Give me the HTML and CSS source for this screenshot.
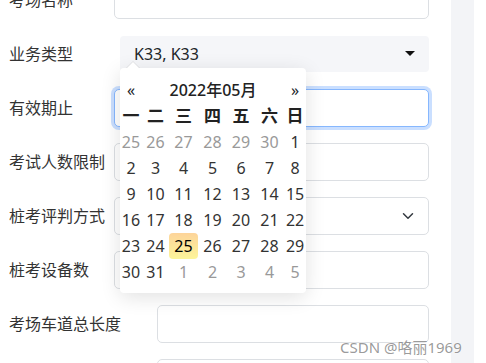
FILE: index.html
```html
<!DOCTYPE html>
<html lang="zh-CN">
<head>
    <meta charset="UTF-8">
    <meta name="viewport" content="width=device-width, initial-scale=1.0">
    <title>考场信息</title>
    <link rel="stylesheet" href="styles.css">
</head>
<body>
    <div class="page">
        <div class="form">
            <div class="row">
                <label class="label">考场名称</label>
                <input class="input" type="text">
            </div>
            <div class="row">
                <label class="label">业务类型</label>
                <div class="picker-btn">
                    <span>K33, K33</span>
                    <span class="caret"></span>
                </div>
            </div>
            <div class="row">
                <label class="label">有效期止</label>
                <input class="input focused" type="text">
            </div>
            <div class="row">
                <label class="label">考试人数限制</label>
                <input class="input" type="text">
            </div>
            <div class="row">
                <label class="label">桩考评判方式</label>
                <div class="input select">
                    <svg class="chevron" width="16" height="12" viewBox="0 0 16 16">
                        <path d="M2 5l6 6 6-6" fill="none" stroke="#343a40" stroke-width="2" stroke-linecap="round" stroke-linejoin="round"/>
                    </svg>
                </div>
            </div>
            <div class="row">
                <label class="label">桩考设备数</label>
                <input class="input" type="text">
            </div>
            <div class="row">
                <label class="label label-wide">考场车道总长度</label>
                <input class="input" type="text">
            </div>
            <div class="row">
                <label class="label label-wide"></label>
                <input class="input" type="text">
            </div>
        </div>
        <div class="side"></div>

        <!-- 日期选择弹层 -->
        <div class="datepicker">
            <table class="cal">
                <colgroup>
                    <col style="width: 22px">
                    <col style="width: 27px">
                    <col style="width: 29px">
                    <col style="width: 29px">
                    <col style="width: 28px">
                    <col style="width: 29px">
                    <col style="width: 22px">
                </colgroup>
                <thead>
                    <tr>
                        <th class="nav">«</th>
                        <th class="title" colspan="5">2022年05月</th>
                        <th class="nav">»</th>
                    </tr>
                    <tr class="dow">
                        <th>一</th><th>二</th><th>三</th><th>四</th><th>五</th><th>六</th><th>日</th>
                    </tr>
                </thead>
                <tbody>
                    <tr><td class="old">25</td><td class="old">26</td><td class="old">27</td><td class="old">28</td><td class="old">29</td><td class="old">30</td><td>1</td></tr>
                    <tr><td>2</td><td>3</td><td>4</td><td>5</td><td>6</td><td>7</td><td>8</td></tr>
                    <tr><td>9</td><td>10</td><td>11</td><td>12</td><td>13</td><td>14</td><td>15</td></tr>
                    <tr><td>16</td><td>17</td><td>18</td><td>19</td><td>20</td><td>21</td><td>22</td></tr>
                    <tr><td>23</td><td>24</td><td class="today">25</td><td>26</td><td>27</td><td>28</td><td>29</td></tr>
                    <tr><td>30</td><td>31</td><td class="new">1</td><td class="new">2</td><td class="new">3</td><td class="new">4</td><td class="new">5</td></tr>
                </tbody>
            </table>
        </div>

        <div class="watermark">CSDN @咯丽1969</div>
    </div>
</body>
</html>
```

FILE: styles.css
```css
* {
    margin: 0;
    padding: 0;
    box-sizing: border-box;
}

body {
    font-family: "Noto Sans", "Noto Sans CJK SC", sans-serif;
    font-size: 16px;
    color: #212529;
    background: #fff;
    overflow: hidden;
}

.page {
    position: relative;
    display: flex;
    height: 363px;
    overflow: hidden;
}

.form {
    width: 451px;
    flex-shrink: 0;
    padding: 0 22px 0 9px;
    margin-top: -19px;
}

.row {
    display: flex;
    align-items: center;
    height: 38px;
    margin-bottom: 16px;
}

.label {
    flex: 0 0 105px;
    white-space: nowrap;
    color: #333;
    line-height: 1;
}

.label-wide {
    flex-basis: 148px;
}

.input {
    flex: 1;
    height: 38px;
    border: 1px solid #dcdfe3;
    border-radius: 5px;
    background: #fff;
    font: inherit;
    outline: none;
}

.input.focused {
    border-color: #86b7fe;
    box-shadow: 0 0 0 3px rgba(13, 110, 253, 0.22);
}

.select {
    display: flex;
    align-items: center;
    justify-content: flex-end;
    padding-right: 12px;
}

.picker-btn {
    flex: 1;
    height: 36px;
    margin-left: 6px;
    padding: 0 14px;
    display: flex;
    align-items: center;
    justify-content: space-between;
    background: #f5f6f9;
    border-radius: 4px;
    color: #212529;
}

.caret {
    width: 0;
    height: 0;
    border-top: 5px solid #111;
    border-left: 5px solid transparent;
    border-right: 5px solid transparent;
    margin-top: -2px;
}

.side {
    width: 23px;
    flex-shrink: 0;
    background: #f3f4f7;
}

.datepicker {
    position: absolute;
    left: 120px;
    top: 68px;
    width: 186px;
    padding: 9px 0 8px;
    background: #fff;
    border-radius: 4px;
    box-shadow: 0 4px 20px rgba(0, 0, 0, 0.12);
}

.datepicker::before {
    content: "";
    position: absolute;
    top: -7px;
    left: 6px;
    border-left: 7px solid transparent;
    border-right: 7px solid transparent;
    border-bottom: 7px solid rgba(0, 0, 0, 0.08);
}

.datepicker::after {
    content: "";
    position: absolute;
    top: -6px;
    left: 7px;
    border-left: 6px solid transparent;
    border-right: 6px solid transparent;
    border-bottom: 6px solid #fff;
}

.cal {
    width: 100%;
    table-layout: fixed;
    border-collapse: collapse;
}

.cal th,
.cal td {
    height: 26px;
    padding: 0;
    text-align: center;
    line-height: 26px;
}

.cal td {
    color: #333;
}

.cal .nav {
    font-weight: normal;
    font-size: 16px;
}

.cal .title {
    font-weight: 500;
    color: #222;
}

.cal .dow th {
    font-weight: bold;
    font-size: 17px;
    color: #222;
}

.cal td.old,
.cal td.new {
    color: #999;
}

.cal td.today {
    border-radius: 4px;
    background: linear-gradient(to bottom, #fdd49a, #fdf59a);
    color: #000;
}

.watermark {
    position: absolute;
    left: 340px;
    top: 336px;
    font-size: 15px;
    color: rgba(110, 110, 110, 0.7);
    text-shadow: 0 0 2px #fff;
    white-space: nowrap;
}
```
